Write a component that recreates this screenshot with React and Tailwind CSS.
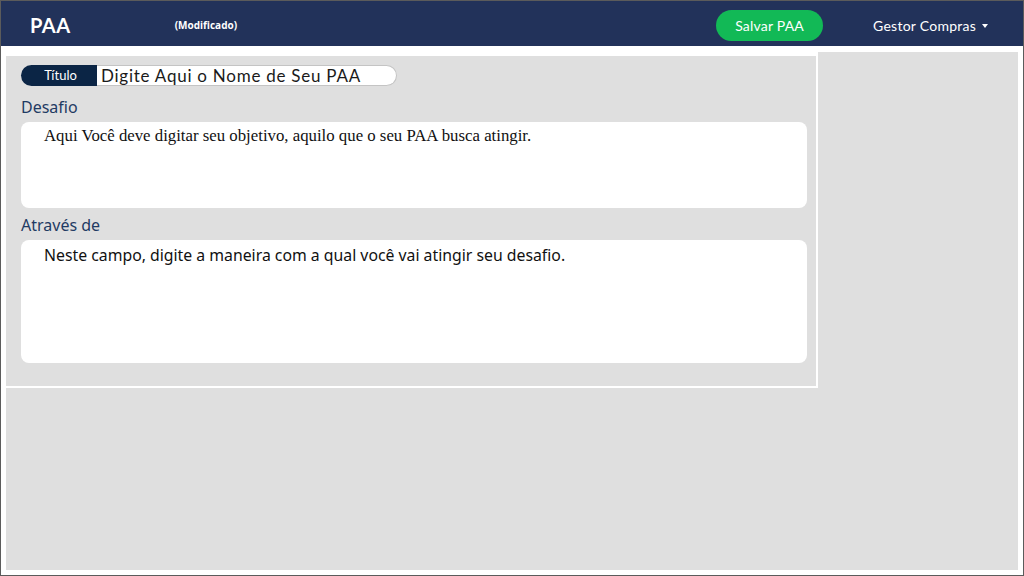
import React from "react";

const Header = () => {
  return (
    <header className="h-[45px] shrink-0 bg-[#22325a] flex items-center pt-[3px] text-white">
      {/* Logo e estado */}
      <span className="ml-[29px] text-[20px] font-bold font-['Lato',sans-serif] tracking-[0.5px]">PAA</span>
      <span className="ml-[104px] text-[10px] font-bold font-['Open_Sans',sans-serif] mt-[1px]">(Modificado)</span>

      <div className="ml-auto flex items-center">
        <button className="w-[107px] h-[31px] rounded-full bg-[#12b956] text-[14px] tracking-[0.2px] font-['Lato',sans-serif] text-white">
          Salvar PAA
        </button>
        <button className="ml-[50px] mr-[35px] flex items-center gap-[6px] text-[14px] tracking-[0.25px] font-['Lato',sans-serif] text-white">
          Gestor Compras
          <svg width="6" height="4" viewBox="0 0 6 4" className="mt-[1px]">
            <path d="M0 0 L6 0 L3 4 Z" fill="#ffffff" />
          </svg>
        </button>
      </div>
    </header>
  );
};

const Label = ({ children, className }) => (
  <div className={"h-[24px] leading-[24px] text-[16px] text-[#1f3b63] font-['Noto_Sans',sans-serif] " + className}>
    {children}
  </div>
);

export default function App() {
  return (
    <div className="w-[1024px] h-[576px] border border-[#5b5b5b] bg-white flex flex-col overflow-hidden">
      <Header />

      <main className="flex-1 flex flex-col px-[5px] pt-[6px] pb-[5px]">
        <div className="flex-1 bg-[#dfdfdf] flex flex-col items-start">
          {/* Cartão do PAA */}
          <section className="w-[812px] h-[336px] border-t-4 border-r-2 border-b-2 border-white pl-[15px] pr-[9px] pt-[9px]">
            <div className="flex items-stretch h-[21px] w-[376px]">
              <div className="w-[76px] bg-[#0b2545] rounded-l-full flex items-center justify-center text-white text-[13px] font-['Lato',sans-serif] pl-[3px]">
                Título
              </div>
              <div className="flex-1 bg-white border border-l-0 border-[#c4c4c4] rounded-r-full flex items-center pl-[4px] text-[17px] tracking-[0.75px] text-[#1a1a1a] font-['Lato',sans-serif]">
                Digite Aqui o Nome de Seu PAA
              </div>
            </div>

            <Label className="mt-[9px]">Desafio</Label>
            <div className="mt-[3px] h-[86px] bg-white rounded-[8px] pl-[23px] pt-[5px] text-[16.8px] leading-[18px] text-[#111] font-['Liberation_Serif',serif]">
              Aqui Você deve digitar seu objetivo, aquilo que o seu PAA busca atingir.
            </div>

            <Label className="mt-[5px]">Através de</Label>
            <div className="mt-[3px] h-[123px] bg-white rounded-[8px] pl-[23px] pt-[4px] text-[15.8px] leading-[22px] text-[#111] font-['Noto_Sans',sans-serif]">
              Neste campo, digite a maneira com a qual você vai atingir seu desafio.
            </div>
          </section>
        </div>
      </main>
    </div>
  );
}
